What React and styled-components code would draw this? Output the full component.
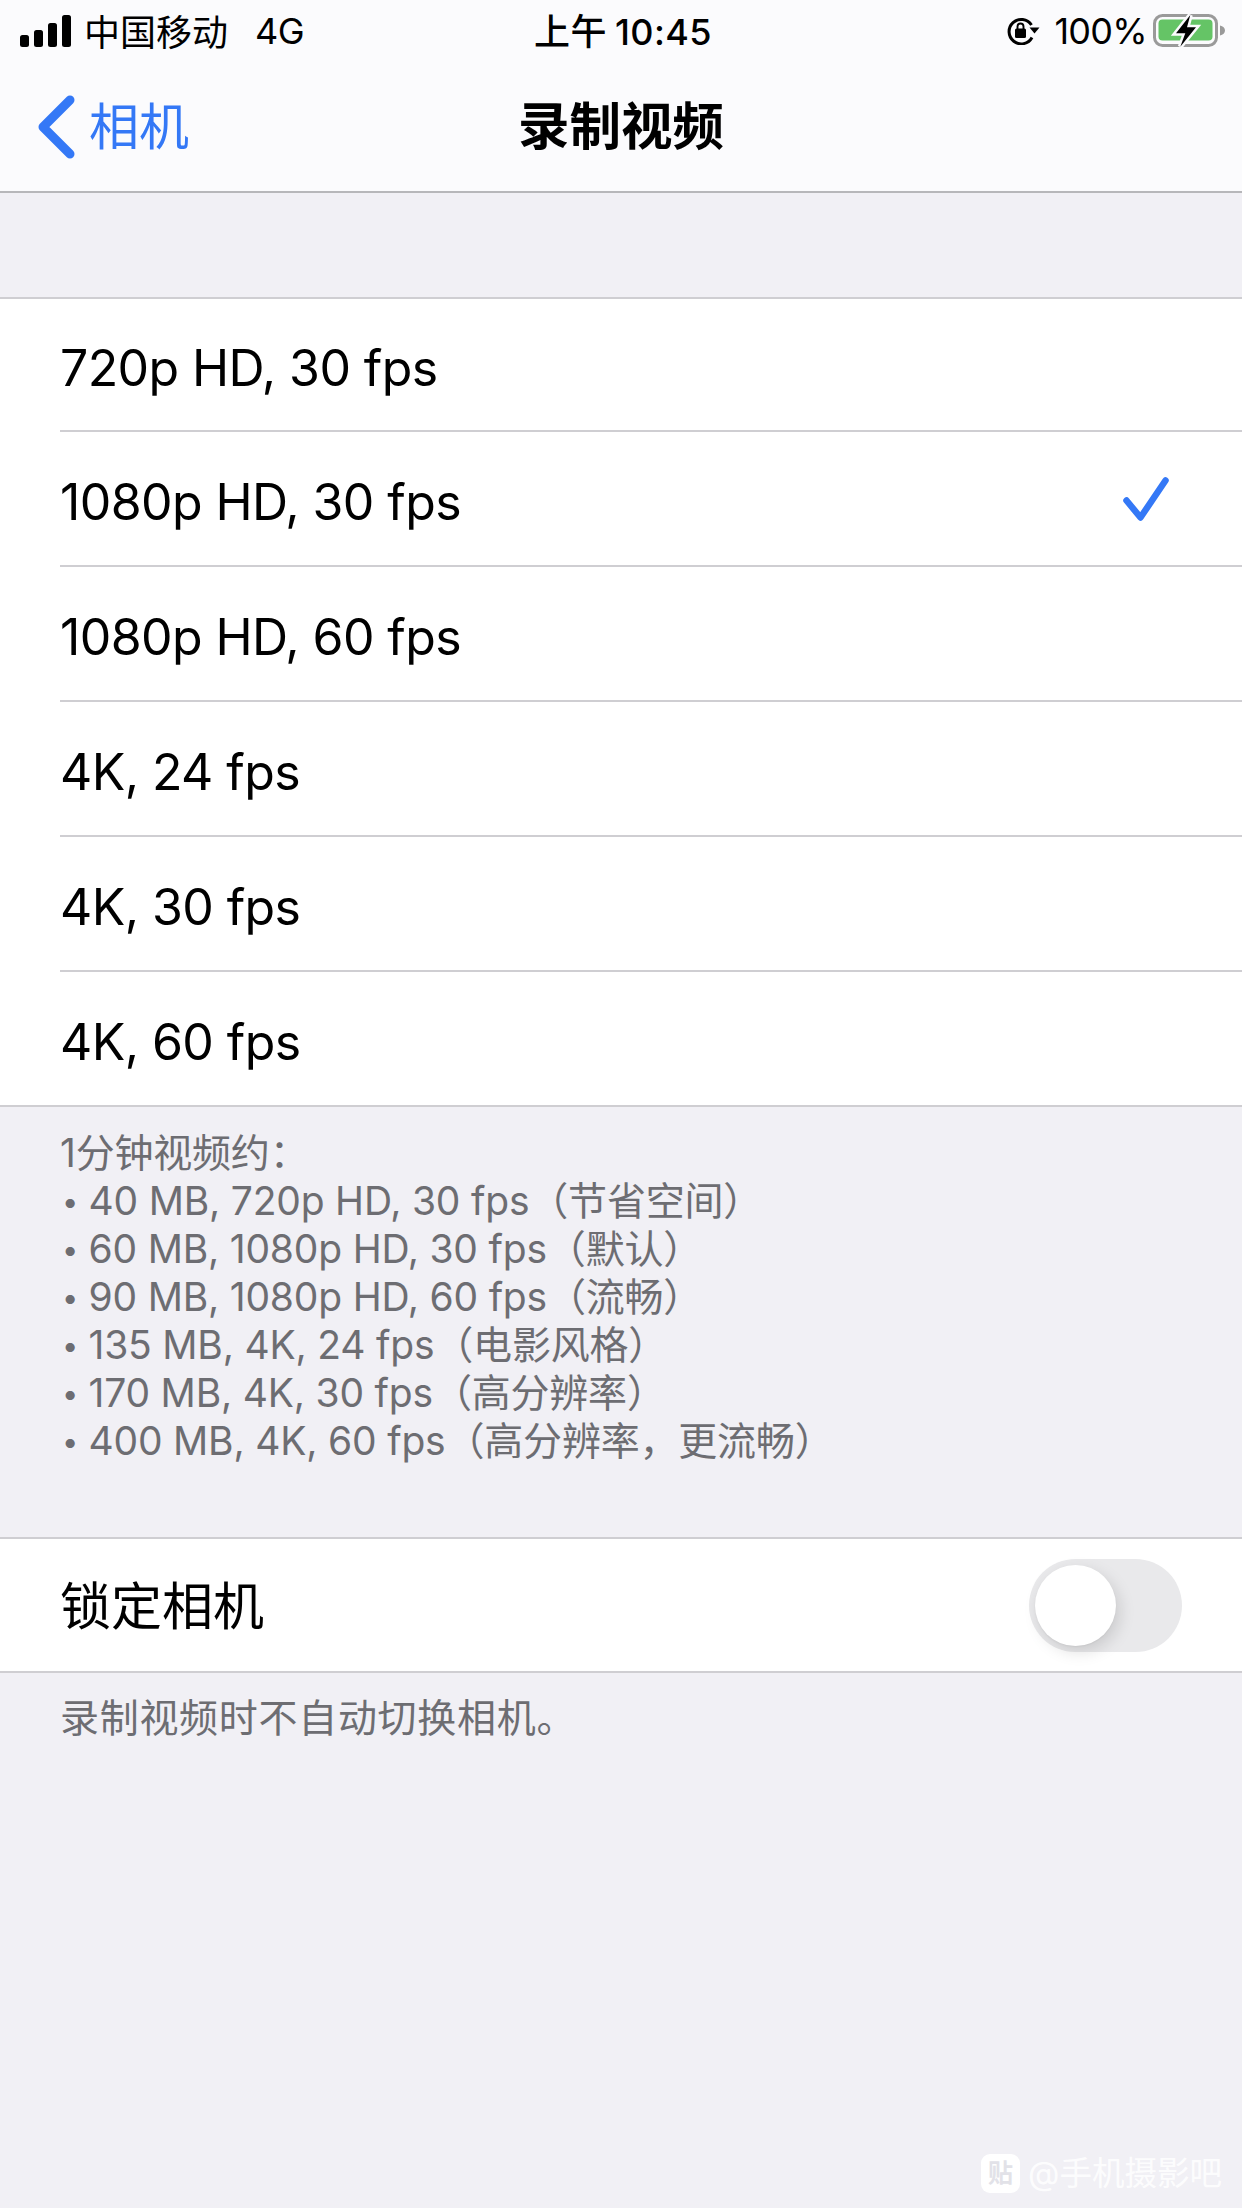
import React from "react";
import styled, { createGlobalStyle } from "styled-components";

const Global = createGlobalStyle`
  html, body { margin: 0; padding: 0; background: #f1f0f5; }
  body { font-family: Inter, "Noto Sans CJK SC", sans-serif; -webkit-font-smoothing: antialiased; }
`;
const CJK = `Inter, "Noto Sans CJK SC", sans-serif`;

const Page = styled.div`
  position: relative; width: 1242px; height: 2208px; overflow: hidden;
  display: flex; flex-direction: column; background: #f1f0f5; font-family: ${CJK};
`;
const Header = styled.header`
  height: 193px; box-sizing: border-box; background: #fbfbfd; border-bottom: 2px solid #b7b7ba;
  display: flex; flex-direction: column; flex: none;
`;
const StatusBar = styled.div`
  height: 62px; display: grid; grid-template-columns: 1fr auto 1fr; align-items: center;
  padding: 0 16px 0 20px; color: #000; font-size: 36px;
`;
const StatusLeft = styled.div`display: flex; align-items: center; gap: 14px;`;
const Carrier = styled.span`padding-bottom: 2px; margin-left: -1px;`;
const Network = styled.span`margin-left: 13px; font-size: 36px; letter-spacing: -.5px;`;
const Clock = styled.div`font-size: 36px; font-weight: 500; letter-spacing: .4px; word-spacing: -2px; padding-bottom: 4px;`;
const StatusRight = styled.div`display: flex; align-items: center; justify-content: flex-end; gap: 6px;`;
const Percent = styled.span`font-size: 36px; letter-spacing: -.7px; margin-left: 8px;`;
const NavBar = styled.nav`
  flex: 1; display: grid; grid-template-columns: 1fr auto 1fr; align-items: center; padding: 0 38px;
`;
const Back = styled.div`display: flex; align-items: center; gap: 14px; color: #3478f6; font-size: 50px;`;
const BackLabel = styled.span`padding-bottom: 8px;`;
const Title = styled.h1`margin: 0; padding-bottom: 8px; font-size: 51.500px; font-weight: 600; color: #000;`;

const Section = styled.section`
  background: #fff; border-top: 2px solid #cfced2; border-bottom: 2px solid #cfced2;
  margin-top: ${p => p.$top}px; flex: none;
`;
const Row = styled.div`
  height: ${p => p.$h || 135}px; box-sizing: border-box; margin-left: 60px; padding-right: 73px;
  display: flex; align-items: center; justify-content: space-between;
  color: #000; line-height: 1;
  font-size: ${p => (p.$cjk ? 51 : 50)}px; letter-spacing: ${p => (p.$cjk ? 0 : -0.6)}px;
  & + & { border-top: 2px solid #cfced2; }
  &:first-child:not(:last-child) { height: 131px; }
`;
const RowLabel = styled.span`padding-top: ${p => p.$shift}px;`;
const Note = styled.div`
  margin: ${p => p.$top}px 0 0 60px; font-size: 39px; line-height: 48px; color: #6d6d72;
  flex: none; white-space: pre; letter-spacing: ${p => p.$track || -0.2}px;
`;
const Bullet = styled.span`
  display: inline-block; width: 28.500px; box-sizing: border-box; padding-left: 2px;
  font-size: 29px; line-height: 1; vertical-align: 3px;
`;

const Toggle = styled.div`
  position: relative; width: 153px; height: 93px; border-radius: 47px; background: #e9e9eb; margin-right: -13px; flex: none;
`;
const Knob = styled.div`
  position: absolute; left: 6px; top: 6px; width: 81px; height: 81px; border-radius: 50%; background: #fff;
  box-shadow: 4px 6px 16px rgba(0,0,0,.13), 0 1px 2px rgba(0,0,0,.05);
`;
const Watermark = styled.div`
  position: absolute; left: 981px; top: 2154px; display: flex; align-items: center; gap: 8px;
  color: rgba(255,255,255,.85); font-size: 32.500px; line-height: 39px;
`;
const Badge = styled.span`
  width: 39px; height: 39px; border-radius: 9px; background: #fff; color: #e2e2e8;
  display: flex; align-items: center; justify-content: center; font-size: 25px; font-weight: 700;
`;

const Signal = () => (
  <svg width="51" height="32" viewBox="0 0 51 32">
    {[[0, 20, 12], [14, 15, 17], [28, 8, 24], [42, 0, 32]].map(([x, y, h]) => (
      <rect key={x} x={x} y={y} width="9" height={h} rx="2.5" fill="#000" />
    ))}
  </svg>
);
const RotationLock = () => (
  <svg width="33" height="28" viewBox="0 0 33 28" fill="none">
    <path d="M25 20.500A12.200 12.200 0 1 1 24.500 8" stroke="#000" strokeWidth="3" />
    <path d="M22.500 10.500h10l-5 6z" fill="#000" />
    <rect x="8" y="11.500" width="11" height="9.500" rx="1.500" fill="#000" />
    <path d="M10.500 12V9.500a3 3 0 0 1 6 0V12" stroke="#000" strokeWidth="1.900" />
  </svg>
);
const BOLT = "M37.300 2 23 20.300h9.300L27.300 33.700 43 14.300h-9z";
const Battery = () => (
  <svg width="73" height="36" viewBox="0 0 73 36">
    <rect x="1.500" y="2.500" width="62" height="30" rx="8" fill="none" stroke="#9a9a9a" strokeWidth="3" />
    <rect x="5.500" y="6.500" width="54" height="21" rx="4" fill="#65c466" />
    <path d="M67 12.500c3 .6 5 2.500 5 5s-2 4.400-5 5z" fill="#9a9a9a" />
    <path d={BOLT} fill="#fbfbfd" stroke="#fbfbfd" strokeWidth="5" />
    <path d={BOLT} fill="#000" />
  </svg>
);
const Chevron = () => (
  <svg width="37" height="64" viewBox="0 0 37 64" fill="none">
    <path d="M32 5 5 32l27 27" stroke="#3478f6" strokeWidth="9" strokeLinecap="round" strokeLinejoin="round" />
  </svg>
);
const Check = () => (
  <svg width="46" height="44" viewBox="0 0 46 44" fill="none">
    <path d="M3.500 23.500 17.500 40.500 42.500 3.500" stroke="#3478f6" strokeWidth="6.500" strokeLinecap="round" strokeLinejoin="round" />
  </svg>
);

const options = ["720p HD, 30 fps", "1080p HD, 30 fps", "1080p HD, 60 fps", "4K, 24 fps", "4K, 30 fps", "4K, 60 fps"];
const notes = [
  "40 MB, 720p HD, 30 fps（节省空间）",
  "60 MB, 1080p HD, 30 fps（默认）",
  "90 MB, 1080p HD, 60 fps（流畅）",
  "135 MB, 4K, 24 fps（电影风格）",
  "170 MB, 4K, 30 fps（高分辨率）",
  "400 MB, 4K, 60 fps（高分辨率，更流畅）",
];

export default function App() {
  return (
    <Page>
      <Global />
      <Header>
        <StatusBar>
          <StatusLeft>
            <Signal />
            <Carrier>中国移动</Carrier>
            <Network>4G</Network>
          </StatusLeft>
          <Clock>上午 10:45</Clock>
          <StatusRight>
            <RotationLock />
            <Percent>100%</Percent>
            <Battery />
          </StatusRight>
        </StatusBar>
        <NavBar>
          <Back><Chevron /><BackLabel>相机</BackLabel></Back>
          <Title>录制视频</Title>
          <div />
        </NavBar>
      </Header>
      <Section $top={104}>
        {options.map((o, i) => (
          <Row key={o}><RowLabel $shift={6}>{o}</RowLabel>{i === 1 && <Check />}</Row>
        ))}
      </Section>
      <Note $top={22}>
        1分钟视频约：{"\n"}
        {notes.map((n, i) => (
          <React.Fragment key={n}><Bullet>•</Bullet>{n}{i < notes.length - 1 ? "\n" : ""}</React.Fragment>
        ))}
      </Note>
      <Section $top={72}>
        <Row $h={132} $cjk><RowLabel $shift={3}>锁定相机</RowLabel><Toggle><Knob /></Toggle></Row>
      </Section>
      <Note $top={21} $track={0.7}>录制视频时不自动切换相机。</Note>
      <Watermark><Badge>贴</Badge>@手机摄影吧</Watermark>
    </Page>
  );
}
